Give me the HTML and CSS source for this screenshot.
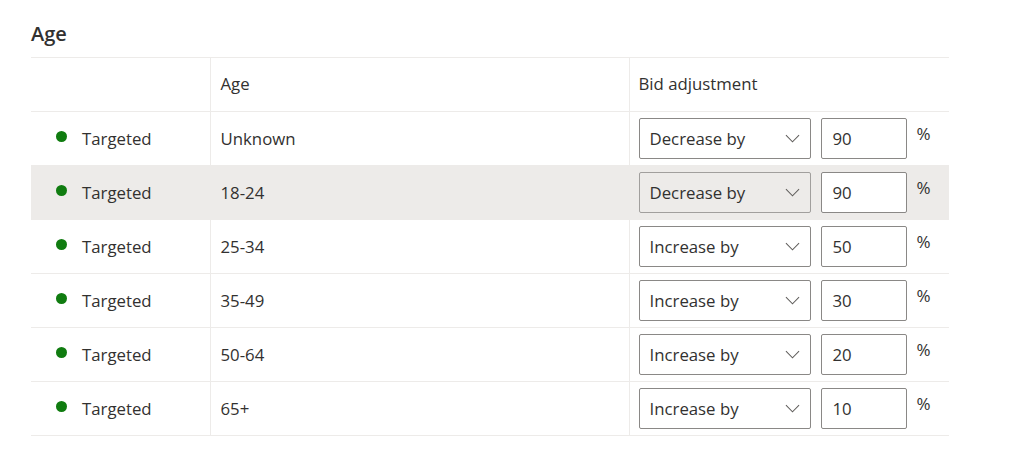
FILE: index.html
```html
<!DOCTYPE html>
<html lang="en">
<head>
    <meta charset="UTF-8">
    <title>Age - Bid adjustments</title>
    <link rel="stylesheet" href="styles.css">
</head>
<body>
    <div class="section">
        <h2 class="section-title">Age</h2>

        <table class="bid-table">
            <thead>
                <tr>
                    <th class="col-status"></th>
                    <th class="col-age">Age</th>
                    <th class="col-bid">Bid adjustment</th>
                </tr>
            </thead>
            <tbody>
                <tr>
                    <td class="col-status"><span class="dot"></span>Targeted</td>
                    <td class="col-age">Unknown</td>
                    <td class="col-bid">
                        <div class="bid-controls">
                            <div class="dropdown"><span>Decrease by</span>
                                <svg class="chevron" width="16" height="9" viewBox="0 0 16 9"><path d="M1 1l7 7 7-7" fill="none" stroke="#605e5c" stroke-width="1.1"/></svg>
                            </div>
                            <div class="number-box">90</div>
                            <span class="pct">%</span>
                        </div>
                    </td>
                </tr>
                <tr class="hover">
                    <td class="col-status"><span class="dot"></span>Targeted</td>
                    <td class="col-age">18-24</td>
                    <td class="col-bid">
                        <div class="bid-controls">
                            <div class="dropdown"><span>Decrease by</span>
                                <svg class="chevron" width="16" height="9" viewBox="0 0 16 9"><path d="M1 1l7 7 7-7" fill="none" stroke="#605e5c" stroke-width="1.1"/></svg>
                            </div>
                            <div class="number-box">90</div>
                            <span class="pct">%</span>
                        </div>
                    </td>
                </tr>
                <tr>
                    <td class="col-status"><span class="dot"></span>Targeted</td>
                    <td class="col-age">25-34</td>
                    <td class="col-bid">
                        <div class="bid-controls">
                            <div class="dropdown"><span>Increase by</span>
                                <svg class="chevron" width="16" height="9" viewBox="0 0 16 9"><path d="M1 1l7 7 7-7" fill="none" stroke="#605e5c" stroke-width="1.1"/></svg>
                            </div>
                            <div class="number-box">50</div>
                            <span class="pct">%</span>
                        </div>
                    </td>
                </tr>
                <tr>
                    <td class="col-status"><span class="dot"></span>Targeted</td>
                    <td class="col-age">35-49</td>
                    <td class="col-bid">
                        <div class="bid-controls">
                            <div class="dropdown"><span>Increase by</span>
                                <svg class="chevron" width="16" height="9" viewBox="0 0 16 9"><path d="M1 1l7 7 7-7" fill="none" stroke="#605e5c" stroke-width="1.1"/></svg>
                            </div>
                            <div class="number-box">30</div>
                            <span class="pct">%</span>
                        </div>
                    </td>
                </tr>
                <tr>
                    <td class="col-status"><span class="dot"></span>Targeted</td>
                    <td class="col-age">50-64</td>
                    <td class="col-bid">
                        <div class="bid-controls">
                            <div class="dropdown"><span>Increase by</span>
                                <svg class="chevron" width="16" height="9" viewBox="0 0 16 9"><path d="M1 1l7 7 7-7" fill="none" stroke="#605e5c" stroke-width="1.1"/></svg>
                            </div>
                            <div class="number-box">20</div>
                            <span class="pct">%</span>
                        </div>
                    </td>
                </tr>
                <tr>
                    <td class="col-status"><span class="dot"></span>Targeted</td>
                    <td class="col-age">65+</td>
                    <td class="col-bid">
                        <div class="bid-controls">
                            <div class="dropdown"><span>Increase by</span>
                                <svg class="chevron" width="16" height="9" viewBox="0 0 16 9"><path d="M1 1l7 7 7-7" fill="none" stroke="#605e5c" stroke-width="1.1"/></svg>
                            </div>
                            <div class="number-box">10</div>
                            <span class="pct">%</span>
                        </div>
                    </td>
                </tr>
            </tbody>
        </table>
    </div>
</body>
</html>
```

FILE: styles.css
```css
body {
    margin: 0;
    background: #fff;
    font-family: "Open Sans", "Noto Sans", Arial, sans-serif;
    color: #323130;
}
.section {
    padding: 22px 0 0 31px;
}
.section-title {
    margin: 0;
    font-size: 20px;
    font-weight: 600;
    line-height: 24px;
    height: 35px;
}
.bid-table {
    border-collapse: collapse;
    width: 918px;
    table-layout: fixed;
    font-size: 16.8px;
}
.bid-table th,
.bid-table td {
    height: 54px;
    padding: 0 0 0 10px;
    border-top: 1px solid #edebe9;
    border-bottom: 1px solid #edebe9;
    text-align: left;
    font-weight: 400;
    vertical-align: middle;
    box-sizing: border-box;
}
.bid-table th {
    padding-bottom: 2px;
}
.bid-table .col-status {
    width: 179px;
    padding-left: 25px;
}
.bid-table .col-age {
    width: 419px;
    border-left: 1px solid #edebe9;
    border-right: 1px solid #edebe9;
}
.bid-table .col-bid {
    padding-left: 9px;
}
.bid-table tr.hover td {
    background: #edebe9;
}
.dot {
    display: inline-block;
    width: 11px;
    height: 11px;
    border-radius: 50%;
    background: #107c10;
    margin-right: 15px;
    position: relative;
    top: -3px;
}
.bid-controls {
    display: flex;
    align-items: center;
    gap: 10px;
}
.dropdown {
    width: 172px;
    height: 41px;
    box-sizing: border-box;
    border: 1px solid #8a8886;
    border-radius: 2px;
    background: #fff;
    display: flex;
    align-items: center;
    justify-content: space-between;
    padding: 0 10px 0 10px;
}
.hover .dropdown {
    background: #edebe9;
    border-color: #a19f9d;
}
.chevron {
    display: block;
    width: 15px;
}
.number-box {
    width: 86px;
    height: 41px;
    box-sizing: border-box;
    border: 1px solid #8a8886;
    border-radius: 2px;
    background: #fff;
    padding: 0 11px;
    display: flex;
    align-items: center;
}
.pct {
    align-self: flex-start;
    margin-top: 4px;
    font-size: 17px;
}
```
